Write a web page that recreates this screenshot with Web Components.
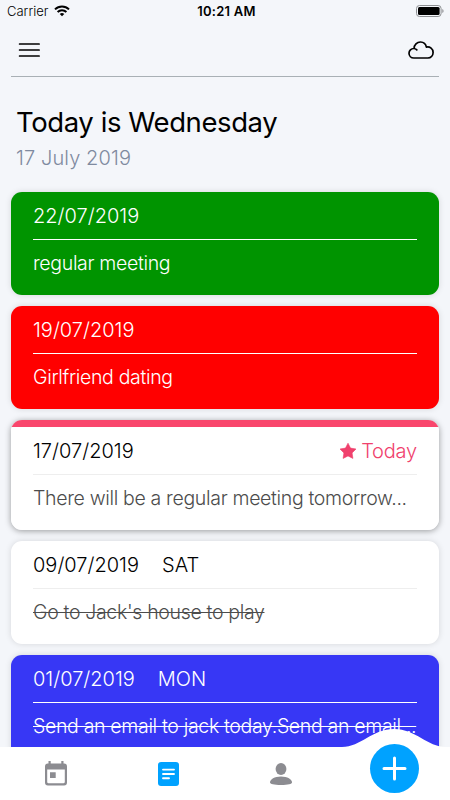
<!DOCTYPE html>
<html lang="en">
<head>
<meta charset="utf-8">
<title>Schedule</title>
<style>
  html, body {
    margin: 0;
    height: 100%;
    overflow: hidden;
    background: #f4f6fa;
    font-family: Inter, "Liberation Sans", sans-serif;
    color: #000;
  }
</style>
</head>
<body>
<schedule-app></schedule-app>

<script>
class StatusBar extends HTMLElement {
  constructor() {
    super()
    this.attachShadow({ mode: 'open' })
  }

  connectedCallback() {
    this.shadowRoot.innerHTML = `
      <style>
        :host {
          display: grid;
          grid-template-columns: 1fr auto 1fr;
          align-items: center;
          height: 22px;
          padding: 0 6px 0 7px;
          font-size: 13px;
        }
        .carrier { display: flex; align-items: center; gap: 6px; font-weight: 300; }
        .time { font-weight: 600; font-size: 13px; letter-spacing: 0.25px; padding-left: 2px; }
        .battery { justify-self: end; }
        svg { display: block; }
      </style>
      <div class="carrier">
        <span>Carrier</span>
        <svg width="16" height="12" viewBox="0 0 16 12" fill="none" stroke="#000" stroke-width="2">
          <path d="M1 4.4a10 10 0 0 1 14 0M3.6 7a6.3 6.3 0 0 1 8.8 0"/>
          <path d="M8 11.3 5.7 9a3.3 3.3 0 0 1 4.600 0z" fill="#000" stroke="none"/>
        </svg>
      </div>
      <span class="time">${this.getAttribute('time')}</span>
      <svg class="battery" width="28" height="12" viewBox="0 0 28 12">
        <rect x=".5" y=".5" width="24.6" height="11" rx="3" fill="none" stroke="#8d8f92"/>
        <rect x="2" y="2" width="21.6" height="8" rx="1.5"/>
        <path d="M26.3 4v4q1.3-.7 1.3-2t-1.3-2z" fill="#8d8f92"/>
      </svg>
    `
  }
}

customElements.define('status-bar', StatusBar)

class NavHeader extends HTMLElement {
  constructor() {
    super()
    this.attachShadow({ mode: 'open' })
  }

  connectedCallback() {
    this.shadowRoot.innerHTML = `
      <style>
        :host {
          display: flex;
          justify-content: space-between;
          align-items: center;
          box-sizing: border-box;
          height: 55px;
          margin: 0 11px;
          padding: 1px 5px 0 7px;
          border-bottom: 1px solid #a9b0b5;
        }
        svg { display: block; }
      </style>
      <svg width="22" height="16" viewBox="0 0 22 16" fill="none" stroke="#000" stroke-width="1.7" stroke-linecap="round">
        <path d="M1.600 2h19.500M1.600 8h19.500M1.600 14h19.500"/>
      </svg>
      <svg width="26" height="18" viewBox="0 0 26 18" fill="none" stroke="#000" stroke-width="1.7" stroke-linecap="round" stroke-linejoin="round">
        <path d="M8.800 8.900C8 8 7 7.500 5.900 7.500A4.700 4.700 0 0 0 1 12.200 4.800 4.800 0 0 0 5.800 17h14.100a5.400 5.400 0 0 0 5.200-5.400 5.500 5.500 0 0 0-6.700-5.500A6.400 6.400 0 0 0 12.500 1a6.300 6.300 0 0 0-6.400 6.300"/>
      </svg>
    `
  }
}

customElements.define('nav-header', NavHeader)

class DayTitle extends HTMLElement {
  constructor() {
    super()
    this.attachShadow({ mode: 'open' })
  }

  connectedCallback() {
    this.shadowRoot.innerHTML = `
      <style>
        :host { display: block; padding: 28px 16px 0; height: 87px; }
        h1 {
          margin: 0;
          font-size: 27.5px;
          line-height: 35px;
          font-weight: 400;
          letter-spacing: -0.42px;
        }
        p {
          margin: 0;
          font-size: 20px;
          line-height: 36px;
          font-weight: 350;
          letter-spacing: 0.1px;
          color: #7f8a9f;
        }
      </style>
      <h1><slot></slot></h1>
      <p><slot name="date"></slot></p>
    `
  }
}

customElements.define('day-title', DayTitle)

class EventCard extends HTMLElement {
  constructor() {
    super()
    this.attachShadow({ mode: 'open' })
  }

  connectedCallback() {
    const star = `
      <svg width="18" height="18" viewBox="0 0 18 18">
        <path d="M9 1.200l2.500 4.900 5.500.9-3.900 3.900.8 5.500L9 13.900l-4.900 2.500.8-5.500L1 7l5.500-.9z" fill="currentColor" stroke="currentColor" stroke-width=".6" stroke-linejoin="round"/>
      </svg>`

    this.shadowRoot.innerHTML = `
      <style>
        :host {
          --fg: #fff;
          --text: #fff;
          --line: #fff;
          display: block;
          box-sizing: border-box;
          height: 103px;
          padding: 0 22px;
          border-radius: 11px;
          overflow: hidden;
          flex: none;
          font-size: 20px;
          font-weight: 350;
          box-shadow: 0 0 6px rgba(0, 0, 0, 0.13);
          background: #fff;
          color: var(--fg);
        }
        :host([tone="green"]) { background: #009400; }
        :host([tone="red"]) { background: #f00; }
        :host([tone="blue"]) { background: #3737f5; }
        :host([tone="white"]) { --fg: #000; --text: #4c4c4c; --line: #eee; }
        :host([today]) {
          height: 110px;
          padding-top: 7px;
          background: linear-gradient(#f9466c 7px, #fff 7px);
          box-shadow: 0 1px 6px rgba(0, 0, 0, 0.38);
        }
        header {
          display: flex;
          align-items: center;
          gap: 23px;
          height: 47px;
          border-bottom: 1px solid var(--line);
        }
        .badge {
          display: flex;
          align-items: center;
          gap: 4px;
          margin-left: auto;
          color: #f0416d;
        }
        .badge span { letter-spacing: -0.2px; }
        .text {
          height: 47px;
          line-height: 47px;
          color: var(--text);
          white-space: nowrap;
          font-size: 19.500px;
          letter-spacing: -0.33px;
        }
        :host([done]) .text { text-decoration: line-through; text-decoration-thickness: 1px; }
      </style>
      <header>
        <span class="date">${this.getAttribute('date')}</span>
        ${this.hasAttribute('day') ? `<span class="day">${this.getAttribute('day')}</span>` : ''}
        ${this.hasAttribute('today') ? `<span class="badge">${star}<span>Today</span></span>` : ''}
      </header>
      <div class="text"><slot></slot></div>
    `
  }
}

customElements.define('event-card', EventCard)

class TabBar extends HTMLElement {
  constructor() {
    super()
    this.attachShadow({ mode: 'open' })
  }

  connectedCallback() {
    this.shadowRoot.innerHTML = `
      <style>
        :host {
          position: absolute;
          left: 0;
          right: 0;
          bottom: 0;
          height: 53px;
        }
        .shape { position: absolute; left: 0; bottom: 0; display: block; }
        nav {
          position: relative;
          display: grid;
          grid-template-columns: repeat(4, 112.5px);
          justify-items: center;
          align-items: center;
          height: 53px;
        }
        nav svg { display: block; }
        .add {
          width: 49px;
          height: 49px;
          margin: -10px 0 0 1px;
          border-radius: 50%;
          background: #00a2ff;
          display: grid;
          place-items: center;
        }
      </style>
      <svg class="shape" width="450" height="72" viewBox="0 0 450 72">
        <path d="M0 19H342C361 19 372 1 394 1S427 19 446 19H450V72H0z" fill="#fff"/>
      </svg>
      <nav>
        <svg width="22" height="25" viewBox="0 0 22 25">
          <path fill="#8c8c91" fill-rule="evenodd" d="M3.500 0h2.200v2.500h10.600V0h2.200v2.500h.6A2.900 2.900 0 0 1 22 5.400v16.200a2.900 2.900 0 0 1-2.900 2.900H2.900A2.900 2.900 0 0 1 0 21.600V5.400a2.900 2.900 0 0 1 2.900-2.900h.6zM2.200 8.600v12.500c0 .7.5 1.200 1.200 1.200h15.200c.7 0 1.200-.5 1.200-1.200V8.600zM5 11.200h5.700V17H5z"/>
        </svg>
        <svg width="21" height="24" viewBox="0 0 21 24">
          <rect width="21" height="24" rx="3" fill="#00a2ff"/>
          <path d="M5 7.600h11M5 12h11M5 16.300h6" stroke="#fff" stroke-width="1.900" stroke-linecap="round"/>
        </svg>
        <svg width="22" height="22" viewBox="0 0 22 22" fill="#8c8c91">
          <ellipse cx="11" cy="6" rx="5.400" ry="6"/>
          <path d="M0 19.500c0-3.200 4.500-6 11-6s11 2.800 11 6c0 1.400-4 2.500-11 2.500S0 20.900 0 19.500z"/>
        </svg>
        <div class="add">
          <svg width="25" height="25" viewBox="0 0 25 25" stroke="#fff" stroke-width="3" stroke-linecap="round">
            <path d="M12.500 2v21M2 12.500h21"/>
          </svg>
        </div>
      </nav>
    `
  }
}

customElements.define('tab-bar', TabBar)

class ScheduleApp extends HTMLElement {
  constructor() {
    super()
    this.attachShadow({ mode: 'open' })
  }

  connectedCallback() {
    this.shadowRoot.innerHTML = `
      <style>
        :host {
          display: flex;
          flex-direction: column;
          position: relative;
          height: 800px;
          width: 450px;
          overflow: hidden;
        }
        .list { display: flex; flex-direction: column; gap: 11px; padding: 0 11px; }
      </style>
      <status-bar time="10:21 AM"></status-bar>
      <nav-header></nav-header>
      <day-title>Today is Wednesday<span slot="date">17 July 2019</span></day-title>
      <div class="list">
        <event-card tone="green" date="22/07/2019">regular meeting</event-card>
        <event-card tone="red" date="19/07/2019">Girlfriend dating</event-card>
        <event-card tone="white" today date="17/07/2019">There will be a regular meeting tomorrow...</event-card>
        <event-card tone="white" done date="09/07/2019" day="SAT">Go to Jack's house to play</event-card>
        <event-card tone="blue" done date="01/07/2019" day="MON">Send an email to jack today.Send an email...</event-card>
      </div>
      <tab-bar></tab-bar>
    `
  }
}

customElements.define('schedule-app', ScheduleApp)
</script>
</body>
</html>
